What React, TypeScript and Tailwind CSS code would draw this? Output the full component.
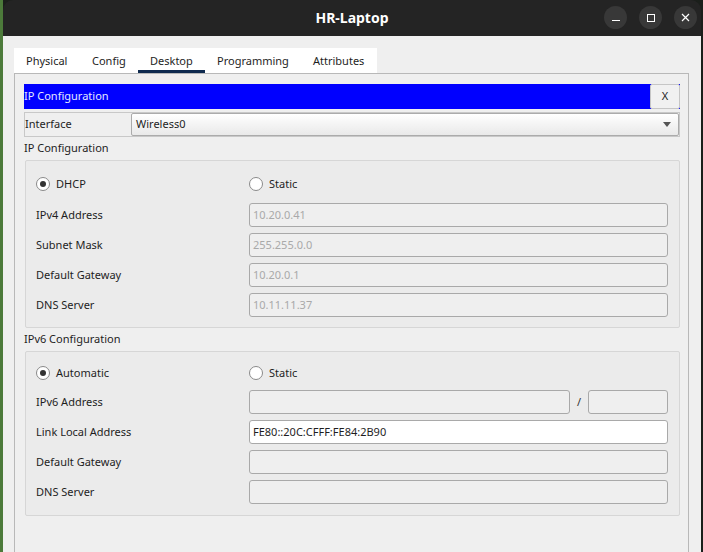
import { ReactNode } from 'react';

const tabs = [
  { label: 'Physical', w: 'w-[66px]' },
  { label: 'Config', w: 'w-[58px]' },
  { label: 'Desktop', w: 'w-[67px]', active: true },
  { label: 'Programming', w: 'w-[96px]' },
  { label: 'Attributes', w: 'w-[76px]' },
];

function Radio({ checked, label }: { checked?: boolean; label: string }) {
  return (
    <div className="flex items-center gap-[6px]">
      <span className="w-[14px] h-[14px] rounded-full border border-[#8a8a8a] bg-white flex items-center justify-center">
        {checked && <span className="w-[6px] h-[6px] rounded-full bg-[#333]" />}
      </span>
      <span>{label}</span>
    </div>
  );
}

function Field({ value, white }: { value?: string; white?: boolean }) {
  return (
    <div
      className={`h-[24px] flex-1 flex items-center px-[3px] rounded-[3px] border border-[#a9a9a9] ${
        white ? 'bg-white text-[#1e1e1e]' : 'bg-[#efefef] text-[#a9a9a9]'
      }`}
    >
      {value}
    </div>
  );
}

function Row({ label, children }: { label: string; children: ReactNode }) {
  return (
    <div className="flex items-center h-[24px]">
      <div className="w-[213px]">{label}</div>
      <div className="flex-1 flex items-center">{children}</div>
    </div>
  );
}

function Group({ children }: { children: ReactNode }) {
  return (
    <div className="ml-[1px] border border-[#d6d6d6] rounded-[2px] bg-[#ebebeb] pl-[10px] pr-[11px]">
      {children}
    </div>
  );
}

export default function App() {
  return (
    <div
      className="w-[703px] h-[552px] flex bg-[#1b1f1b] overflow-hidden text-[11px] text-[#1e1e1e]"
      style={{ fontFamily: '"Noto Sans", "Open Sans", sans-serif' }}
    >
      <div className="w-[3px] bg-[#4c7a3a]" />
      <div className="w-[698px] flex flex-col">
        {/* Title bar */}
        <div className="h-[36px] bg-[#242424] rounded-tl-[10px] rounded-tr-[10px] flex items-center relative">
          <div className="flex-1 text-center text-white font-bold text-[14px] pb-[2px]">HR-Laptop</div>
          <div className="absolute right-[4px] top-[6px] flex gap-[12px]">
            <button className="w-[23px] h-[23px] rounded-full bg-[#383838] flex items-center justify-center">
              <span className="block w-[8px] h-[1px] bg-white mt-[6px]" />
            </button>
            <button className="w-[23px] h-[23px] rounded-full bg-[#383838] flex items-center justify-center">
              <span className="block w-[8px] h-[8px] border border-white" />
            </button>
            <button className="w-[23px] h-[23px] rounded-full bg-[#383838] flex items-center justify-center">
              <svg width="9" height="9" viewBox="0 0 9 9" stroke="white" strokeWidth="1.2">
                <path d="M1 1 L8 8 M8 1 L1 8" />
              </svg>
            </button>
          </div>
        </div>

        {/* Body */}
        <div className="flex-1 bg-[#efefef] pl-[11px] pr-[12px] pt-[12px] flex flex-col">
          <div className="flex bg-white w-[363px] h-[25px]">
            {tabs.map((t) => (
              <div key={t.label} className={`${t.w} relative flex items-center pl-[12px] pt-[1px]`}>
                {t.label}
                {t.active && <span className="absolute left-0 right-0 bottom-0 h-[3px] bg-[#0f2a4f]" />}
              </div>
            ))}
          </div>

          <div className="flex-1 border border-[#b8b8b8] border-b-0 pl-[9px] pr-[8px] pt-[10px]">
            {/* Blue header */}
            <div className="h-[25px] bg-[#0000ff] flex items-center">
              <div className="flex-1 text-[#e4e8ff]">IP Configuration</div>
              <button className="w-[30px] h-[25px] bg-[#f1f1f1] border border-[#c6c6c6] rounded-[2px] text-[#222]">
                X
              </button>
            </div>

            {/* Interface */}
            <div className="mt-[3px] h-[25px] border border-[#c8c8c8] flex items-center">
              <div className="w-[106px]">Interface</div>
              <div className="flex-1 h-[23px] rounded-[2px] border border-[#ababab] bg-gradient-to-b from-[#ffffff] to-[#e9e9e9] flex items-center pl-[4px] pr-[7px]">
                <span className="flex-1">Wireless0</span>
                <svg width="8" height="5" viewBox="0 0 8 5">
                  <path d="M0 0 L8 0 L4 5 Z" fill="#555" />
                </svg>
              </div>
            </div>

            <div className="h-[23px] flex items-center">IP Configuration</div>
            <Group>
              <div className="pt-[11px] pb-[10px] flex flex-col">
                <div className="h-[24px] flex items-center">
                  <div className="w-[213px]">
                    <Radio checked label="DHCP" />
                  </div>
                  <Radio label="Static" />
                </div>
                <div className="mt-[7px] flex flex-col gap-[6px]">
                  <Row label="IPv4 Address">
                    <Field value="10.20.0.41" />
                  </Row>
                  <Row label="Subnet Mask">
                    <Field value="255.255.0.0" />
                  </Row>
                  <Row label="Default Gateway">
                    <Field value="10.20.0.1" />
                  </Row>
                  <Row label="DNS Server">
                    <Field value="10.11.11.37" />
                  </Row>
                </div>
              </div>
            </Group>

            <div className="h-[23px] flex items-center">IPv6 Configuration</div>
            <Group>
              <div className="pt-[9px] pb-[11px] flex flex-col">
                <div className="h-[24px] flex items-center">
                  <div className="w-[213px]">
                    <Radio checked label="Automatic" />
                  </div>
                  <Radio label="Static" />
                </div>
                <div className="mt-[5px] flex flex-col gap-[6px]">
                  <Row label="IPv6 Address">
                    <Field />
                    <span className="w-[18px] text-center text-[#333]">/</span>
                    <div className="w-[80px] h-[24px] rounded-[3px] border border-[#a9a9a9] bg-[#efefef]" />
                  </Row>
                  <Row label="Link Local Address">
                    <Field white value="FE80::20C:CFFF:FE84:2B90" />
                  </Row>
                  <Row label="Default Gateway">
                    <Field />
                  </Row>
                  <Row label="DNS Server">
                    <Field />
                  </Row>
                </div>
              </div>
            </Group>
          </div>
        </div>
      </div>
      <div className="w-[2px] bg-[#1b1f1b]" />
    </div>
  );
}
